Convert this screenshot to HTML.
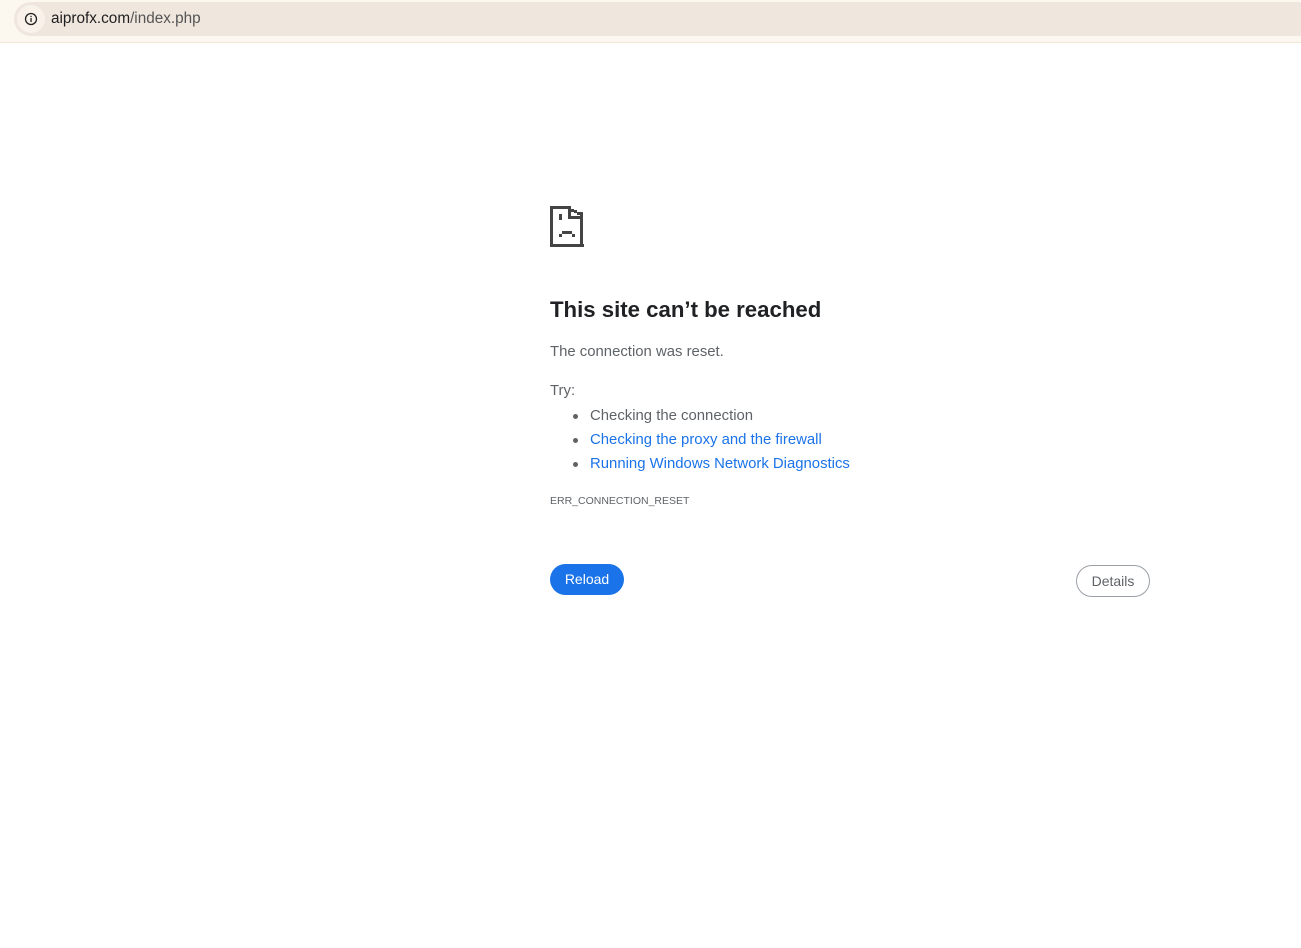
<!DOCTYPE html>
<html><head><meta charset="utf-8"><style>
*{margin:0;padding:0;box-sizing:border-box}
body{width:1301px;height:948px;background:#fff;font-family:"Liberation Sans",sans-serif;position:relative;overflow:hidden}
.top{position:absolute;left:0;top:0;width:1301px;height:43px;background:#fdf8ef;border-bottom:1px solid #efe6d6}
.omni{position:absolute;left:14px;top:2px;width:1300px;height:34px;background:#efe6de;border-radius:17px}
.info{position:absolute;left:3px;top:3px;width:28px;height:28px;border-radius:50%;background:#f8f2ea}
.url{position:absolute;left:51px;top:10px;font-size:15.3px;color:#1f1f1f}
.url span{color:#555}
.a{position:absolute;left:550px}
h1{position:absolute;left:550px;top:297px;font-size:22.2px;font-weight:bold;color:#202124}
.t{font-size:14.9px;color:#5f6368}
ul{position:absolute;left:590px;top:406px;list-style:none}
li{font-size:14.9px;height:24px;line-height:20px;position:relative;color:#5f6368}
li:before{content:"";position:absolute;left:-17px;top:8px;width:5px;height:5px;border-radius:50%;background:#5f6368}
li.l{color:#1a73e8}
.btn{position:absolute;border-radius:16px;font-size:14px;text-align:center;line-height:30px}
</style></head><body>
<div class="top"><div class="omni"><div class="info"><svg width="28" height="28" viewBox="0 0 28 28"><circle cx="14" cy="14" r="5.5" fill="none" stroke="#222" stroke-width="1.3"/><rect x="13.4" y="13" width="1.3" height="4" fill="#222"/><rect x="13.4" y="10.8" width="1.3" height="1.3" fill="#222"/></svg></div></div>
<div class="url">aiprofx.com<span>/index.php</span></div></div>
<svg class="a" style="top:206px" width="34" height="42" viewBox="550 206 34 42" fill="#444">
<rect x="550" y="206" width="3" height="41"/><rect x="550" y="244" width="34" height="3"/><rect x="580" y="212" width="3" height="35"/>
<rect x="550" y="206" width="21" height="3"/><rect x="568" y="206" width="3" height="13"/><rect x="568" y="216" width="15" height="3"/>
<rect x="571" y="209" width="3" height="3"/><rect x="574" y="210" width="3" height="3"/><rect x="577" y="212" width="3" height="3"/>
<rect x="559" y="214" width="3" height="6"/><rect x="562" y="231" width="10" height="3"/><rect x="559" y="234" width="3" height="3"/><rect x="572" y="234" width="3" height="3"/>
</svg>
<h1>This site can’t be reached</h1>
<div class="a t" style="top:344px">The connection was reset.</div>
<div class="a t" style="top:383px">Try:</div>
<ul><li>Checking the connection</li><li class="l">Checking the proxy and the firewall</li><li class="l">Running Windows Network Diagnostics</li></ul>
<div class="a" style="top:495px;font-size:10.5px;color:#5f6368">ERR_CONNECTION_RESET</div>
<div class="btn" style="left:550px;top:564px;width:74px;height:31px;background:#1a73e8;color:#fff">Reload</div>
<div class="btn" style="left:1076px;top:565px;width:74px;height:32px;border:1px solid #9aa0a6;color:#5f6368">Details</div>
</body></html>
